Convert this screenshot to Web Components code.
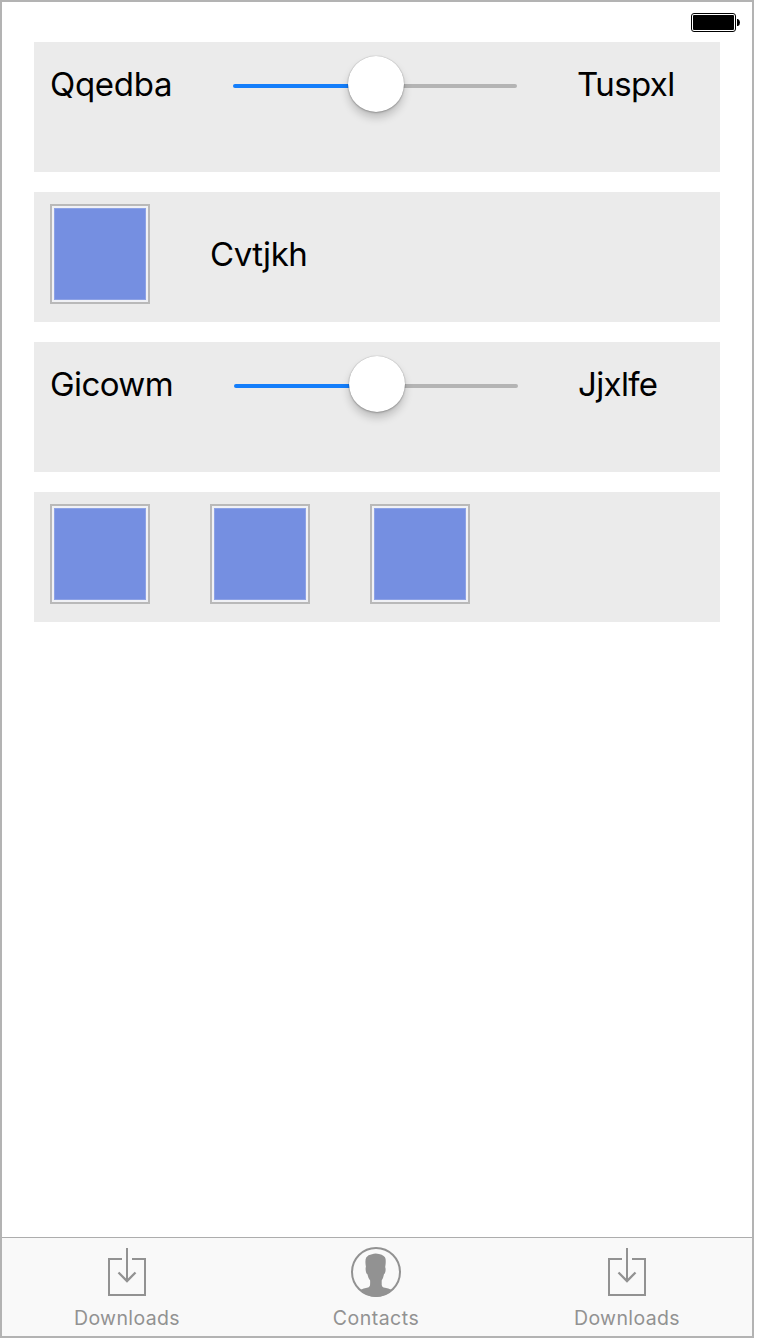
<!DOCTYPE html>
<html lang="en">
<head>
<meta charset="utf-8">
<title>Controls</title>
<style>
body { margin: 0; background: #fff; font-family: Inter, "Liberation Sans", sans-serif; color: #000; }
</style>
</head>
<body>
<phone-frame>
  <battery-icon slot="status"></battery-icon>
  <form-row>
    <text-label style="--w:182px;--ls:-.3px">Qqedba</text-label>
    <range-slider></range-slider>
    <text-label style="--ml:59px;--ls:-.6px">Tuspxl</text-label>
  </form-row>
  <form-row>
    <color-swatch></color-swatch>
    <text-label style="--ml:60px;--mt:20px;--ls:-.4px">Cvtjkh</text-label>
  </form-row>
  <form-row>
    <text-label style="--w:183px;--ls:-.6px">Gicowm</text-label>
    <range-slider></range-slider>
    <text-label style="--ml:59px;--ls:-.65px">Jjxlfe</text-label>
  </form-row>
  <form-row style="--gap:60px">
    <color-swatch></color-swatch>
    <color-swatch></color-swatch>
    <color-swatch></color-swatch>
  </form-row>
  <tab-item slot="tabs" icon="download">Downloads</tab-item>
  <tab-item slot="tabs" icon="contact" style="--ls:.48px">Contacts</tab-item>
  <tab-item slot="tabs" icon="download" style="--pl:2px">Downloads</tab-item>
</phone-frame>
<script>
function define(name, html, setup) {
  customElements.define(name, class extends HTMLElement {
    constructor() {
      super();
      const t = document.createElement('template');
      t.innerHTML = html;
      this.attachShadow({ mode: 'open' }).append(t.content.cloneNode(true));
      if (setup) setup(this);
    }
  });
}

define('phone-frame', `
<style>
:host { display: flex; flex-direction: column; box-sizing: border-box; width: 754px; height: 1338px; border: 2px solid #b3b3b3; background: #fff; }
header { display: flex; justify-content: flex-end; height: 40px; box-sizing: border-box; padding: 11px 12px 0 0; }
main { flex: 1; display: flex; flex-direction: column; gap: 20px; padding: 0 32px; }
nav { display: grid; grid-template-columns: 250px 248px 252px; height: 99px; box-sizing: border-box; border-top: 1px solid #adadad; background: #f9f9f9; }
</style>
<header><slot name="status"></slot></header>
<main><slot></slot></main>
<nav><slot name="tabs"></slot></nav>`);

define('battery-icon', `
<style>:host { display: block; height: 19px; } svg { display: block; }</style>
<svg width="49" height="19" viewBox="0 0 49 19">
<rect x=".5" y=".5" width="44" height="18" rx="2.5" fill="#fff" stroke="#000"/>
<rect x="2" y="2" width="41" height="15" rx="1"/>
<path d="M46 6h1q2 1 2 3.500t-2 3.500h-1z"/>
</svg>`);

define('form-row', `
<style>:host { display: flex; align-items: flex-start; gap: var(--gap, 0); box-sizing: border-box; height: 130px; padding: 12px 16px 0; background: #ebebeb; }</style>
<slot></slot>`);

define('text-label', `
<style>:host { display: block; box-sizing: border-box; width: var(--w, auto); margin: var(--mt, 0) 0 0 var(--ml, 0); padding-top: 9px; font-size: 33px; line-height: 42px; letter-spacing: var(--ls, 0); white-space: nowrap; }</style>
<slot></slot>`);

define('range-slider', `
<style>
:host { display: grid; grid-template-columns: 116px 56px 114px; align-items: center; width: 286px; height: 60px; }
i { display: block; height: 4px; margin-top: 4px; background: #b4b4b4; }
.on { background: #147efb; border-radius: 2px 0 0 2px; margin-left: 1px; margin-right: -4px; }
.off { border-radius: 0 2px 2px 0; margin-left: -4px; margin-right: 1px; }
b { display: block; height: 56px; border-radius: 50%; background: #fff; position: relative; z-index: 1; box-shadow: 0 0 1px rgba(0,0,0,.35), 0 1px 2px rgba(0,0,0,.22), 0 6px 9px rgba(0,0,0,.19); }
</style>
<i class="on"></i><b></b><i class="off"></i>`);

define('color-swatch', `
<style>
:host { display: block; box-sizing: border-box; width: 100px; height: 100px; border: 2px solid #b9b9b9; background: #f0f1f5; padding: 2px; }
div { height: 92px; box-sizing: border-box; background: #758fe1; border: 1px solid #8da2e5; }
</style><div></div>`);

const icons = {
  download: `<g fill="none" stroke="#929292" stroke-width="2"><path d="M21 13H8v36h36V13H31M26 2v33"/><path d="M17.500 26.500 26 35l8.500-8.500" stroke-width="2.300"/></g>`,
  contact: `<circle cx="26" cy="26" r="24" fill="none" stroke="#929292" stroke-width="2"/><path fill="#929292" d="M10 44Q14 42 17 41.700 19 41.600 19.800 40 20.300 38 20.100 34.500 18.200 32 17.400 28.200 16 27.500 15.900 25.500 15.300 22.500 15.900 20.800 14.800 14 16.200 11.500 18 8.600 22 8.300 25 6.900 29 8 35 9.400 35.600 13 36 17 35.200 21 36 23 35.300 26 34.800 28 34 28.200 33.300 32 31.700 34.500V39Q32 41.500 35 41.800 38 42 42 44 35 51 26 51 17 51 10 44Z"/>`
};
define('tab-item', `
<style>
:host { display: flex; flex-direction: column; align-items: center; color: #929292; font-size: 19.500px; line-height: 24px; letter-spacing: var(--ls, .38px); padding: 8px 0 0 var(--pl, 0); }
svg { display: block; width: 52px; height: 52px; margin-bottom: 8px; }
</style>
<svg viewBox="0 0 52 52"></svg><span><slot></slot></span>`,
el => { el.shadowRoot.querySelector('svg').innerHTML = icons[el.getAttribute('icon')]; });
</script>
</body>
</html>
